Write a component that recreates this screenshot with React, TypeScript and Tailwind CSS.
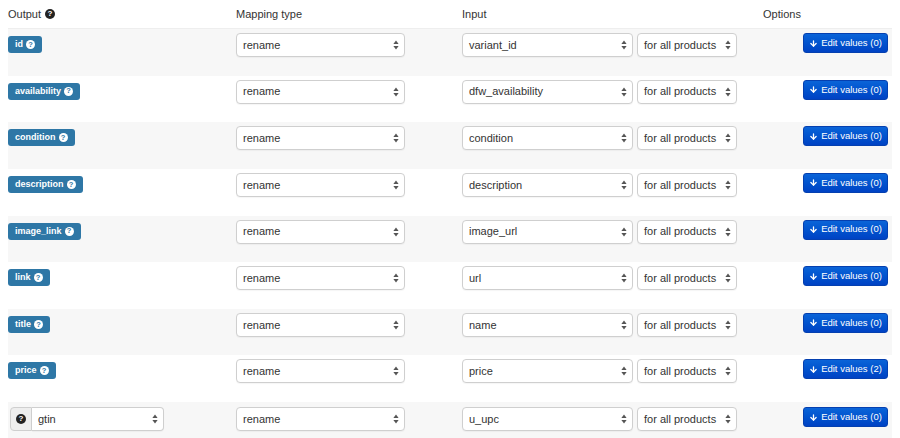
import { ArrowDown } from "lucide-react";

const rows = [
  { output: "id", input: "variant_id", count: 0 },
  { output: "availability", input: "dfw_availability", count: 0 },
  { output: "condition", input: "condition", count: 0 },
  { output: "description", input: "description", count: 0 },
  { output: "image_link", input: "image_url", count: 0 },
  { output: "link", input: "url", count: 0 },
  { output: "title", input: "name", count: 0 },
  { output: "price", input: "price", count: 2 },
  { output: "gtin", input: "u_upc", count: 0, custom: true },
];

function Arrows() {
  return (
    <svg width="6" height="10" viewBox="0 0 6 10" className="shrink-0">
      <path d="M3 0.5 L5.6 4 L0.4 4 Z" fill="#555" />
      <path d="M3 9.5 L5.6 6 L0.4 6 Z" fill="#555" />
    </svg>
  );
}

function Select({ value, className }: { value: string; className: string }) {
  return (
    <div
      className={
        "flex h-[24px] items-center justify-between rounded-[4px] border border-[#cfcfcf] bg-white pl-[6px] pr-[5px] text-[11px] text-[#333] shadow-[0_1px_1px_rgba(0,0,0,0.04)] " +
        className
      }
    >
      <span>{value}</span>
      <Arrows />
    </div>
  );
}

function Help({ dark }: { dark?: boolean }) {
  return dark ? (
    <span className="inline-flex h-[10px] w-[10px] items-center justify-center rounded-full bg-[#222] text-[8px] font-bold leading-none text-white">
      ?
    </span>
  ) : (
    <span className="inline-flex h-[9px] w-[9px] items-center justify-center rounded-full bg-white text-[7.5px] font-bold leading-none text-[#2e77a6]">
      ?
    </span>
  );
}

export default function App() {
  return (
    <div className="h-[438px] w-[900px] overflow-hidden bg-white font-['Liberation_Sans',Arial,sans-serif] text-[#333]">
      <div className="mx-2 w-[884px]">
        {/* header */}
        <div className="grid h-[29px] grid-cols-[228px_226px_301px_129px] items-center border-b border-[#eee] text-[11px]">
          <div className="flex items-center gap-[4px]">
            Output <Help dark />
          </div>
          <div>Mapping type</div>
          <div>Input</div>
          <div>Options</div>
        </div>

        {rows.map((r, i) => (
          <div
            key={r.output}
            className={
              "grid h-[46.625px] grid-cols-[228px_226px_301px_129px] items-start pt-[4px] " +
              (i % 2 === 0 ? "bg-[#f7f7f7]" : "bg-white")
            }
          >
            <div className="flex">
              {r.custom ? (
                <div className="ml-[2px] mt-[1px] flex h-[24px] w-[154px]">
                  <div className="flex w-[22px] items-center justify-center rounded-l-[4px] border border-[#cfcfcf] bg-[#eee]">
                    <Help dark />
                  </div>
                  <Select value="gtin" className="flex-1 rounded-l-none border-l-0" />
                </div>
              ) : (
                <span className="mt-[3px] inline-flex h-[17px] items-center gap-[3px] rounded-[3px] bg-[#2e77a6] px-[7px] text-[9px] font-bold leading-none text-white">
                  {r.output} <Help />
                </span>
              )}
            </div>
            <div className={r.custom ? "pt-[1px]" : ""}>
              <Select value="rename" className="w-[169px]" />
            </div>
            <div className={"flex gap-[4px] " + (r.custom ? "pt-[1px]" : "")}>
              <Select value={r.input} className="w-[171px]" />
              <Select value="for all products" className="w-[100px]" />
            </div>
            <div className={"flex justify-end pr-[4px] " + (r.custom ? "pt-[1px]" : "")}>
              <button className="flex h-[20px] w-[85px] items-center justify-center gap-[3px] rounded-[3px] border border-[#0540b0] bg-gradient-to-b from-[#0b64d8] to-[#0042c4] text-[9.5px] text-white">
                <ArrowDown size={9} strokeWidth={3.5} />
                Edit values ({r.count})
              </button>
            </div>
          </div>
        ))}
      </div>
    </div>
  );
}
